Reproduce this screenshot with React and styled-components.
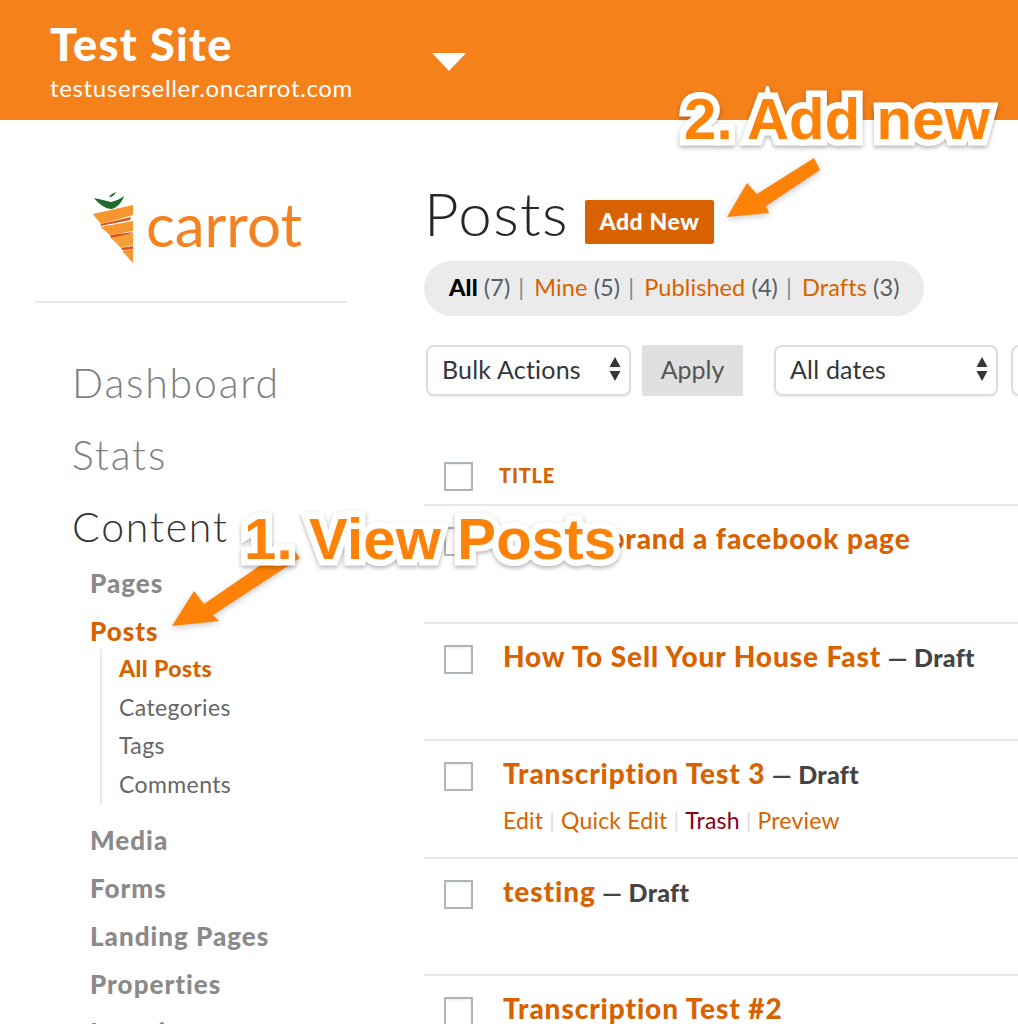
import React from "react";
import styled, { createGlobalStyle } from "styled-components";

const Global = createGlobalStyle`
  html, body { margin: 0; padding: 0; background: #fff; }
  body { font-family: Lato, "Open Sans", sans-serif; }
  * { box-sizing: border-box; }
`;
const Page = styled.div`
  position: relative; width: 1018px; height: 1024px; overflow: hidden; background: #fff;
`;
const Header = styled.header`
  height: 120px; background: #f4811a; padding: 20px 0 0 50px; display: flex; color: #fff;
`;
const SiteInfo = styled.div`width: 382px;`;
const SiteName = styled.div`font-size: 45px; font-weight: 900; line-height: 48px; letter-spacing: 1.3px;`;
const SiteUrl = styled.div`font-size: 24px; line-height: 30px; margin-top: 5px; letter-spacing: .65px;`;
const Caret = styled.div`
  width: 0; height: 0; margin-top: 33px;
  border-left: 17px solid transparent; border-right: 17px solid transparent; border-top: 18px solid #fff;
`;
const Body = styled.div`display: flex;`;
const Sidebar = styled.aside`width: 424px; flex: none; padding: 70px 0 0 35px;`;
const Logo = styled.div`
  width: 312px; height: 113px; border-bottom: 2px solid #e8e8e8; display: flex; align-items: flex-start; padding-left: 57px;
`;
const LogoWord = styled.span`
  font-size: 60px; font-weight: 400; line-height: 68px; color: #f58220; margin-left: 12px; letter-spacing: 0;
`;
const Nav = styled.nav`padding: 44px 0 0 37px; display: flex; flex-direction: column;`;
const NavTop = styled.div`
  font-size: 41px; font-weight: 300; line-height: 72px; letter-spacing: 1.8px; color: ${p => (p.$active ? "#333" : "#7f7f7f")};
`;
const NavSub = styled.div`
  padding-left: 18px; font-size: 26px; font-weight: 900; line-height: 48px; letter-spacing: 1px; color: ${p => (p.$active ? "#d86200" : "#8a8a8a")};
`;
const SubSub = styled.div`
  margin: -6px 0 12px 28px; padding: 0 0 0 17px; border-left: 2px solid #e8e8e8; display: flex; flex-direction: column;
`;
const SubSubItem = styled.div`
  font-size: 23px; line-height: 38.7px; font-weight: ${p => (p.$active ? 900 : 400)}; color: ${p => (p.$active ? "#d86200" : "#666")}; letter-spacing: .4px;
`;
const NavFirstSub = styled.div`margin-top: -4px;`;
const Main = styled.main`flex: 1; min-width: 0; padding-top: 64px; overflow: hidden;`;
const TitleRow = styled.div`display: flex; align-items: center; height: 62px;`;
const Title = styled.h1`
  margin: -4px 0 0; font-size: 60px; font-weight: 300; line-height: 62px; color: #23282d; letter-spacing: 1.4px;
`;
const AddButton = styled.div`
  margin: 14px 0 0 16px; width: 129px; height: 44px; background: #d86200; border-radius: 2px; color: #fff;
  font-size: 23px; font-weight: 900; letter-spacing: .6px; display: flex; align-items: center; justify-content: center; padding-bottom: 2px;
`;
const Filters = styled.div`
  margin-top: 15px; width: 500px; height: 55px; border-radius: 28px; background: #ebebeb; padding: 0 0 4px 25px;
  display: flex; align-items: center; font-size: 23.5px; color: #555d66; letter-spacing: .1px; white-space: pre;
`;
const FilterAll = styled.b`color: #000; font-weight: 900;`;
const FilterLink = styled.span`color: #d86200;`;
const FilterSep = styled.span`color: #888; margin: 0 10px 0 8px;`;
const Controls = styled.div`margin-top: 29px; display: flex; align-items: center; height: 51px; padding-left: 2px;`;
const Select = styled.div`
  flex: none; width: ${p => p.$w}px; height: 51px; margin-left: ${p => p.$ml || 0}px; background: #fff; border: 2px solid #ddd; border-radius: 8px;
  box-shadow: 0 1px 2px rgba(0,0,0,.08); display: flex; align-items: center; justify-content: space-between; padding: 0 7px 3px 14px;
  font-size: 25px; letter-spacing: .2px; color: #32373c;
`;
const ApplyButton = styled.div`
  flex: none; width: 101px; height: 51px; margin-left: 11px; border-radius: 2px; background: #e0e0e0; color: #555;
  font-size: 25px; display: flex; align-items: center; justify-content: center; padding-bottom: 3px;
`;
const HeadRow = styled.div`
  margin-top: 49px; height: 61px; border-bottom: 2px solid #e8e8e8; padding: 17px 0 0 20px; display: flex; align-items: flex-start;
`;
const HeadLabel = styled.div`
  margin-left: 26px; font-size: 20px; font-weight: 900; color: #d86200; line-height: 26px; letter-spacing: .8px;
`;
const Check = styled.span`
  flex: none; display: block; width: 29px; height: 29px; background: #fff; border: 2px solid #b0b5ba; box-shadow: inset 0 1px 2px rgba(0,0,0,.08);
`;
const Row = styled.div`
  height: 117.6px; border-bottom: 2px solid #e8e8e8; padding: 21px 0 0 20px; display: flex; align-items: flex-start;
`;
const RowBody = styled.div`margin: -5px 0 0 30px; white-space: nowrap;`;
const RowTitle = styled.div`
  font-size: 28px; font-weight: 900; color: #d86200; line-height: 32px; letter-spacing: .9px;
`;
const RowState = styled.span`color: #444; font-size: 25px; letter-spacing: .3px;`;
const RowActions = styled.div`
  margin-top: 14px; font-size: 23px; line-height: 32px; color: #d86200; display: flex; align-items: center; letter-spacing: .2px;
`;
const ActionSep = styled.span`color: #ddd; margin: 0 6px; font-size: 22px;`;
const Trash = styled.span`color: #8a0016;`;
const Overlay = styled.svg`position: absolute; left: 0; top: 0; width: 1018px; height: 1024px; pointer-events: none; filter: drop-shadow(0 2px 3px rgba(0,0,0,.22));`;
const Callout = styled.div`
  position: absolute; left: ${p => p.$x}px; top: ${p => p.$y}px; white-space: nowrap;
  font-family: "Liberation Sans", Arial, sans-serif; font-weight: 700; font-size: 58px; line-height: 66px; color: #ff8208; letter-spacing: .2px;
  -webkit-text-stroke: 13px #fff; paint-order: stroke fill; stroke-linejoin: round;
  filter: drop-shadow(0 2px 2px rgba(0,0,0,.3));
`;

const SelectArrows = () => (
  <svg width="14" height="26" viewBox="0 0 14 26"><path d="M7 1l5.5 10H1.5zM7 25l5.5-10H1.5z" fill="#32373c" /></svg>
);

const CarrotMark = () => (
  <svg width="42" height="74" viewBox="0 0 42 74">
    <path d="M2 8C8 9 14 11 19 12C24 11 28 9 32 6C30 12 26 17 20 19C13 19 7 14 2 8Z" fill="#1f6b2e" />
    <path d="M24 2C21 3 18 5 17 7C20 7 23 5 24 2Z" fill="#1f6b2e" />
    <path d="M.7 24L41 15L41 25L9 34Z" fill="#f6962f" />
    <path d="M9 34L39 27L38 30L8.5 36Z" fill="#e0521c" />
    <path d="M8.5 37L41 31L41 41L18 45Z" fill="#f6962f" />
    <path d="M18 45L41 42L33 47L19 48Z" fill="#e0521c" />
    <path d="M19 48L41 43L41 55L29 58Z" fill="#f6a03c" />
    <path d="M29 58L41 56L41 59L31 60.5Z" fill="#e0521c" />
    <path d="M30 61L41 59.5L41 73Z" fill="#f6962f" />
  </svg>
);

const rows = [
  { t: "How to brand a facebook page" },
  { t: "How To Sell Your House Fast", d: true },
  { t: "Transcription Test 3", d: true, a: true },
  { t: "testing", d: true },
  { t: "Transcription Test #2" },
];

export default function App() {
  return (
    <Page>
      <Global />
      <Header>
        <SiteInfo>
          <SiteName>Test Site</SiteName>
          <SiteUrl>testuserseller.oncarrot.com</SiteUrl>
        </SiteInfo>
        <Caret />
      </Header>
      <Body>
        <Sidebar>
          <Logo>
            <CarrotMark />
            <LogoWord>carrot</LogoWord>
          </Logo>
          <Nav>
            <NavTop>Dashboard</NavTop>
            <NavTop>Stats</NavTop>
            <NavTop $active>Content</NavTop>
            <NavFirstSub />
            <NavSub>Pages</NavSub>
            <NavSub $active>Posts</NavSub>
            <SubSub>
              <SubSubItem $active>All Posts</SubSubItem>
              <SubSubItem>Categories</SubSubItem>
              <SubSubItem>Tags</SubSubItem>
              <SubSubItem>Comments</SubSubItem>
            </SubSub>
            <NavSub>Media</NavSub>
            <NavSub>Forms</NavSub>
            <NavSub>Landing Pages</NavSub>
            <NavSub>Properties</NavSub>
            <NavSub>Locations</NavSub>
          </Nav>
        </Sidebar>
        <Main>
          <TitleRow>
            <Title>Posts</Title>
            <AddButton>Add New</AddButton>
          </TitleRow>
          <Filters>
            <FilterAll>All</FilterAll> (7)<FilterSep>|</FilterSep>
            <FilterLink>Mine</FilterLink> (5)<FilterSep>|</FilterSep>
            <FilterLink>Published</FilterLink> (4)<FilterSep>|</FilterSep>
            <FilterLink>Drafts</FilterLink> (3)
          </Filters>
          <Controls>
            <Select $w={205}>Bulk Actions<SelectArrows /></Select>
            <ApplyButton>Apply</ApplyButton>
            <Select $w={224} $ml={31}>All dates<SelectArrows /></Select>
            <Select $w={100} $ml={13} />
          </Controls>
          <HeadRow>
            <Check />
            <HeadLabel>TITLE</HeadLabel>
          </HeadRow>
          {rows.map(r => (
            <Row key={r.t}>
              <Check />
              <RowBody>
                <RowTitle>
                  {r.t}
                  {r.d && <RowState> — Draft</RowState>}
                </RowTitle>
                {r.a && (
                  <RowActions>
                    Edit<ActionSep>|</ActionSep>Quick Edit<ActionSep>|</ActionSep><Trash>Trash</Trash><ActionSep>|</ActionSep>Preview
                  </RowActions>
                )}
              </RowBody>
            </Row>
          ))}
        </Main>
      </Body>
      <Overlay viewBox="0 0 1018 1024">
        <path d="M727 217L747 183L757 194L814 158L820 170L766 206L769 213Z" fill="#ff8208" />
        <path d="M172 626L194 591L204 604L290 545L300 558L213 615L219 621Z" fill="#ff8208" />
      </Overlay>
      <Callout $x={684} $y={86}>2. Add new</Callout>
      <Callout $x={244} $y={506}>1. View Posts</Callout>
    </Page>
  );
}
